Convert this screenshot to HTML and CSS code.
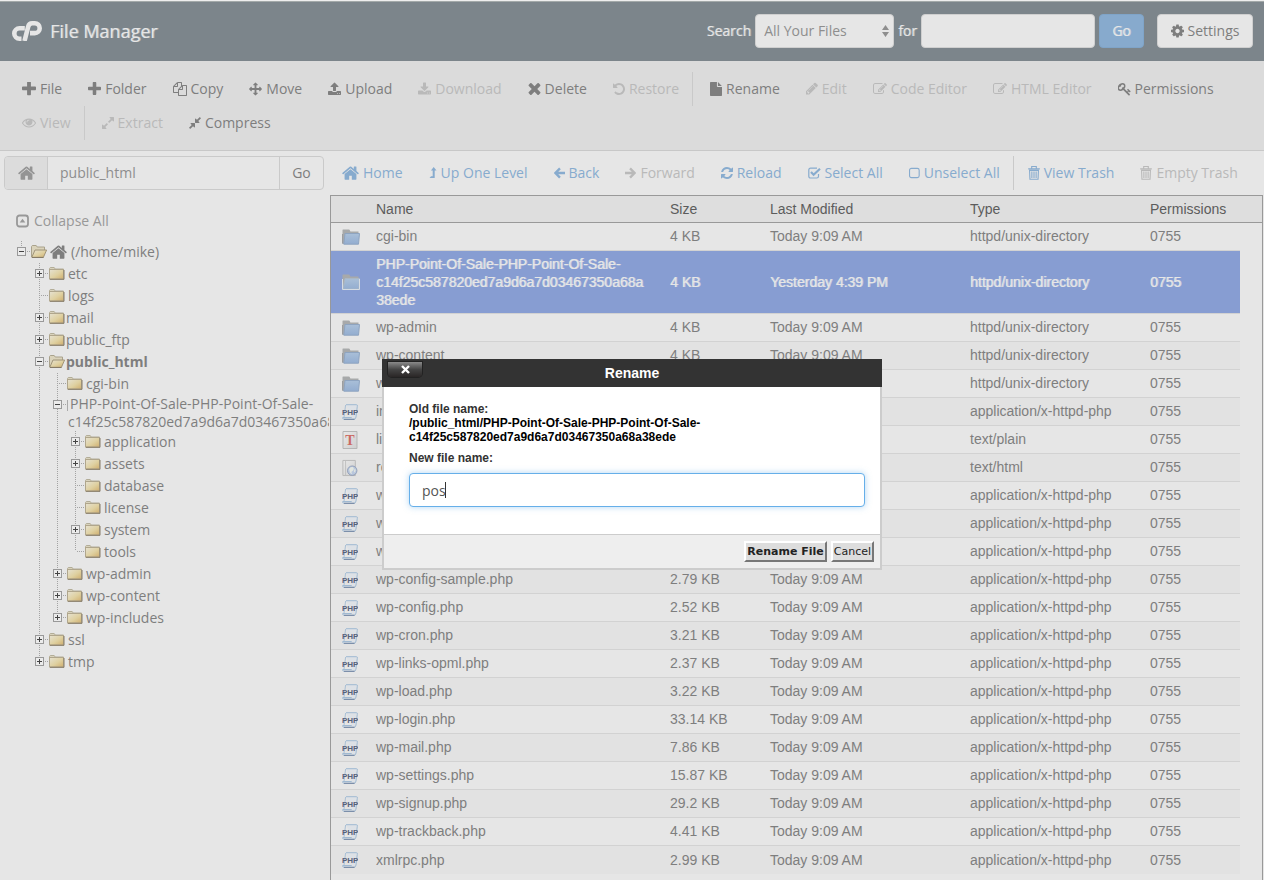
FILE: index.html
```html
<!DOCTYPE html>
<html lang="en">
<head>
<meta charset="utf-8">
<title>File Manager</title>
<link rel="stylesheet" href="styles.css">
</head>
<body>
<svg class="defs" aria-hidden="true">
  <defs>
    <linearGradient id="g-tan" x1="0" y1="0" x2="1" y2="1"><stop offset="0" stop-color="#e6e2d2"/><stop offset=".55" stop-color="#dfd0a0"/><stop offset="1" stop-color="#cfae6e"/></linearGradient>
    <linearGradient id="g-blue" x1="0" y1="0" x2="0" y2="1"><stop offset="0" stop-color="#a9bfd8"/><stop offset="1" stop-color="#93add0"/></linearGradient>
    <linearGradient id="g-page" x1="0" y1="0" x2="1" y2="1"><stop offset="0" stop-color="#e8e8e8"/><stop offset="1" stop-color="#cfcfcf"/></linearGradient>
  </defs>
</svg>
<svg class="sprite" aria-hidden="true">
  <symbol id="plus" viewBox="192 192 1408 1408"><path d="M1600 736v192q0 40-28 68t-68 28h-416v416q0 40-28 68t-68 28h-192q-40 0-68-28t-28-68v-416h-416q-40 0-68-28t-28-68v-192q0-40 28-68t68-28h416v-416q0-40 28-68t68-28h192q40 0 68 28t28 68v416h416q40 0 68 28t28 68z"/></symbol>
  <symbol id="cog" viewBox="128 128 1536 1536"><path fill-rule="evenodd" d="M1152 896q0-106-75-181t-181-75-181 75-75 181 75 181 181 75 181-75 75-181zm512-109v222q0 12-8 23t-20 13l-185 28q-19 54-39 91 35 50 107 138 10 12 10 25t-9 23q-27 37-99 108t-94 71q-12 0-26-9l-138-108q-44 23-91 38-16 136-29 186-7 28-36 28h-222q-14 0-24.500-8.500t-11.500-21.500l-28-184q-49-16-90-37l-141 107q-10 9-25 9-14 0-25-11-126-114-165-168-7-10-7-23 0-12 8-23 15-21 51-66.500t54-70.500q-27-50-41-99l-183-27q-13-2-21-12.500t-8-23.500v-222q0-12 8-23t19-13l186-28q14-46 39-92-40-57-107-138-10-12-10-24 0-10 9-23 26-36 98.500-107.500t94.500-71.500q13 0 26 10l138 107q44-23 91-38 16-136 29-186 7-28 36-28h222q14 0 24.500 8.500t11.500 21.500l28 184q49 16 90 37l142-107q9-9 24-9 13 0 25 10 129 119 165 170 7 8 7 22 0 12-8 23-15 21-51 66.500t-54 70.500q26 50 41 98l183 28q13 2 21 12.500t8 23.500z"/></symbol>
  <symbol id="home" viewBox="80 200 1632 1360"><path d="M1472 992v480q0 26-19 45t-45 19h-384v-384h-256v384h-384q-26 0-45-19t-19-45v-480q0-1 .5-3t.5-3l575-474 575 474q1 2 1 6zm223-69l-62 74q-8 9-21 11h-3q-13 0-21-7l-692-577-692 577q-12 8-24 7-13-2-21-11l-62-74q-8-10-7-23.500t11-21.500l719-599q32-26 76-26t76 26l244 204v-195q0-14 9-23t23-9h192q14 0 23 9t9 23v408l219 182q10 8 11 21.500t-7 23.500z"/></symbol>
  <symbol id="copy" viewBox="0 0 1792 1792"><path d="M1696 384q40 0 68 28t28 68v1216q0 40-28 68t-68 28h-960q-40 0-68-28t-28-68v-288h-544q-40 0-68-28t-28-68v-672q0-40 20-88t48-76l408-408q28-28 76-48t88-20h416q40 0 68 28t28 68v328q68-40 128-40h416zm-544 213l-299 299h299v-299zm-640-384l-299 299h299v-299zm196 647l316-316v-416h-384v416q0 40-28 68t-68 28h-416v640h512v-256q0-40 20-88t48-76zm956 804v-1152h-384v416q0 40-28 68t-68 28h-416v640h896z"/></symbol>
  <symbol id="move" viewBox="0 0 1792 1792"><path d="M1792 896q0 26-19 45l-256 256q-19 19-45 19t-45-19-19-45v-128h-384v384h128q26 0 45 19t19 45-19 45l-256 256q-19 19-45 19t-45-19l-256-256q-19-19-19-45t19-45 45-19h128v-384h-384v128q0 26-19 45t-45 19-45-19l-256-256q-19-19-19-45t19-45l256-256q19-19 45-19t45 19 19 45v128h384v-384h-128q-26 0-45-19t-19-45 19-45l256-256q19-19 45-19t45 19l256 256q19 19 19 45t-19 45-45 19h-128v384h384v-128q0-26 19-45t45-19 45 19l256 256q19 19 19 45z"/></symbol>
  <symbol id="upload" viewBox="64 64 1664 1664"><path d="M1344 1472q0-26-19-45t-45-19-45 19-19 45 19 45 45 19 45-19 19-45zm256 0q0-26-19-45t-45-19-45 19-19 45 19 45 45 19 45-19 19-45zm128-224v320q0 40-28 68t-68 28h-1472q-40 0-68-28t-28-68v-320q0-40 28-68t68-28h427q21 56 70.500 92t110.500 36h256q61 0 110.500-36t70.500-92h427q40 0 68 28t28 68zm-325-648q-17 40-59 40h-256v448q0 26-19 45t-45 19h-256q-26 0-45-19t-19-45v-448h-256q-42 0-59-40-17-39 14-69l448-448q18-19 45-19t45 19l448 448q31 30 14 69z"/></symbol>
  <symbol id="download" viewBox="64 0 1664 1664"><path d="M1344 1344q0-26-19-45t-45-19-45 19-19 45 19 45 45 19 45-19 19-45zm256 0q0-26-19-45t-45-19-45 19-19 45 19 45 45 19 45-19 19-45zm128-224v320q0 40-28 68t-68 28h-1472q-40 0-68-28t-28-68v-320q0-40 28-68t68-28h465l135 136q58 56 136 56t136-56l136-136h464q40 0 68 28t28 68zm-325-569q17 41-14 70l-448 448q-18 19-45 19t-45-19l-448-448q-31-29-14-70 17-39 59-39h256v-448q0-26 19-45t45-19h256q26 0 45 19t19 45v448h256q42 0 59 39z"/></symbol>
  <symbol id="times" viewBox="250 320 1292 1280"><path d="M1490 1322q0 40-28 68l-136 136q-28 28-68 28t-68-28l-294-294-294 294q-28 28-68 28t-68-28l-136-136q-28-28-28-68t28-68l294-294-294-294q-28-28-28-68t28-68l136-136q28-28 68-28t68 28l294 294 294-294q28-28 68-28t68 28l136 136q28 28 28 68t-28 68l-294 294 294 294q28 28 28 68z"/></symbol>
  <symbol id="undo" viewBox="128 64 1536 1664"><path d="M1664 896q0 156-61 298t-164 245-245 164-298 61q-172 0-327-72.500t-264-204.500q-7-10-6.500-22.500t8.500-20.500l137-138q10-9 25-9 16 2 23 12 73 95 179 147t225 52q104 0 198.500-40.500t163.500-109.500 109.500-163.500 40.500-198.500-40.500-198.500-109.500-163.500-163.500-109.500-198.500-40.500q-98 0-188 35.500t-160 101.500l137 138q31 30 14 69-17 40-59 40h-448q-26 0-45-19t-19-45v-448q0-42 40-59 39-17 69 14l130 129q107-101 244.500-156.500t284.500-55.500q156 0 298 61t245 164 164 245 61 298z"/></symbol>
  <symbol id="file" viewBox="0 0 13 15"><path d="M0 .8Q0 0 .8 0H7.500v4.600q0 .8.8.8H13v8.800q0 .8-.8.800H.8q-.8 0-.8-.8zM8.600 0l4.200 4.300H8.600z"/></symbol>
  <symbol id="pencil" viewBox="128 256 1536 1408"><path fill-rule="evenodd" d="M491 1536l91-91-235-235-91 91v107h128v128h107zm523-928q0-22-22-22-10 0-17 7l-542 542q-7 7-7 17 0 22 22 22 10 0 17-7l542-542q7-7 7-17zm-54-192l416 416-832 832h-416v-416zm683 96q0 53-37 90l-166 166-416-416 166-165q36-38 90-38 53 0 91 38l235 234q37 39 37 91z"/></symbol>
  <symbol id="edit" viewBox="0 128 1792 1536"><path d="M888 1184l116-116-152-152-116 116v56h96v96h56zm440-720q-16-16-33 1l-350 350q-17 17-1 33t33-1l350-350q17-17 1-33zm80 594v190q0 119-84.500 203.500t-203.500 84.500h-832q-119 0-203.500-84.500t-84.500-203.500v-832q0-119 84.500-203.500t203.500-84.500h832q63 0 117 25 15 7 18 23 3 17-9 29l-49 49q-14 14-32 8-23-6-45-6h-832q-66 0-113 47t-47 113v832q0 66 47 113t113 47h832q66 0 113-47t47-113v-126q0-13 9-22l64-64q15-15 35-7t20 29zm-96-738l288 288-672 672h-288v-288zm444 132l-92 92-288-288 92-92q28-28 68-28t68 28l152 152q28 28 28 68t-28 68z"/></symbol>
  <symbol id="key" viewBox="64 96 1664 1600"><path d="M832 512q0-80-56-136t-136-56-136 56-56 136q0 42 19 83-41-19-83-19-80 0-136 56t-56 136 56 136 136 56 136-56 56-136q0-42-19-83 41 19 83 19 80 0 136-56t56-136zm851 704q0 17-49 66t-66 49q-9 0-28.500-16t-36.500-33-38.500-40-24.500-26l-96 96 220 220q28 28 28 68 0 42-39 81t-81 39q-40 0-68-28l-671-671q-176 131-365 131-163 0-265.500-102.500t-102.500-265.500q0-160 95-313t248-248 313-95q163 0 265.500 102.500t102.500 265.500q0 189-131 365l355 355 96-96q-3-3-26-24.500t-40-38.500-33-36.500-16-28.500q0-17 49-66t66-49q13 0 23 10 6 6 46 44.500t82 79.500 86.500 86 73 78 28.500 41z"/></symbol>
  <symbol id="eye" viewBox="0 256 1792 1408"><path d="M1664 960q-152-236-381-353 61 104 61 225 0 185-131.500 316.500t-316.500 131.500-316.500-131.500-131.500-316.500q0-121 61-225-229 117-381 353 133 205 333.500 326.500t434.500 121.500 434.500-121.500 333.500-326.500zm-720-384q0-20-14-34t-34-14q-125 0-214.500 89.500t-89.500 214.500q0 20 14 34t34 14 34-14 14-34q0-86 61-147t147-61q20 0 34-14t14-34zm848 384q0 34-20 69-140 230-376.500 368.500t-499.500 138.500-499.500-139-376.500-368q-20-35-20-69t20-69q140-229 376.500-368t499.500-139 499.500 139 376.500 368q20 35 20 69z"/></symbol>
  <symbol id="expand" viewBox="128 128 1536 1536"><path d="M883 1056q0 13-10 23l-332 332 144 144q19 19 19 45t-19 45-45 19h-448q-26 0-45-19t-19-45v-448q0-26 19-45t45-19 45 19l144 144 332-332q10-10 23-10t23 10l114 114q10 10 10 23zm781-864v448q0 26-19 45t-45 19-45-19l-144-144-332 332q-10 10-23 10t-23-10l-114-114q-10-10-10-23t10-23l332-332-144-144q-19-19-19-45t19-45 45-19h448q26 0 45 19t19 45z"/></symbol>
  <symbol id="compress" viewBox="128 128 1536 1536"><path d="M896 960v448q0 26-19 45t-45 19-45-19l-144-144-332 332q-10 10-23 10t-23-10l-114-114q-10-10-10-23t10-23l332-332-144-144q-19-19-19-45t19-45 45-19h448q26 0 45 19t19 45zm755-672q0 13-10 23l-332 332 144 144q19 19 19 45t-19 45-45 19h-448q-26 0-45-19t-19-45v-448q0-26 19-45t45-19 45 19l144 144 332-332q10-10 23-10t23 10l114 114q10 10 10 23z"/></symbol>
  <symbol id="refresh" viewBox="128 128 1536 1536"><path d="M1639 1056q0 5-1 7-64 268-268 434.500t-478 166.500q-146 0-282.500-55t-243.500-157l-129 129q-19 19-45 19t-45-19-19-45v-448q0-26 19-45t45-19h448q26 0 45 19t19 45-19 45l-137 137q71 66 161 102t187 36q134 0 250-65t186-179q11-17 53-117 8-23 30-23h192q13 0 22.500 9.500t9.500 22.500zm25-800v448q0 26-19 45t-45 19h-448q-26 0-45-19t-19-45 19-45l138-138q-148-137-349-137-134 0-250 65t-186 179q-11 17-53 117-8 23-30 23h-199q-13 0-22.500-9.500t-9.500-22.500v-7q65-268 270-434.500t480-166.500q146 0 284 55.500t245 156.500l130-129q19-19 45-19t45 19 19 45z"/></symbol>
  <symbol id="levelup" viewBox="0 0 7 12"><path d="M4.200 0L7 3.600H5.200V11H0L1.600 9.200h1.600V3.600H1.400z"/></symbol>
  <symbol id="left" viewBox="0 0 12 12"><path d="M6.500 1L1.500 6l5 5M2 6h10" fill="none" stroke="currentColor" stroke-width="2.600"/></symbol>
  <symbol id="right" viewBox="0 0 12 12"><path d="M5.500 1l5 5-5 5M10 6H0" fill="none" stroke="currentColor" stroke-width="2.600"/></symbol>
  <symbol id="checked" viewBox="0 0 13 12"><path d="M10.500 7v2.200q0 1.800-1.800 1.800H2.600Q.8 11 .8 9.200V3Q.8 1.200 2.600 1.200H9" fill="none" stroke="currentColor" stroke-width="1.200"/><path d="M3 5l2.600 2.700L12 1.800" fill="none" stroke="currentColor" stroke-width="2.200"/></symbol>
  <symbol id="unchecked" viewBox="0 0 12 12"><rect x=".6" y="1" width="10.500" height="10" rx="2" fill="none" stroke="currentColor" stroke-width="1.200"/></symbol>
  <symbol id="trash" viewBox="0 0 13 16"><path d="M.2 3.500h12.600M4 3V1h5v2M1.700 5.200l.4 9.600h8.800l.4-9.600zM4.200 6.500v7M6.500 6.500v7M8.800 6.500v7" fill="none" stroke="currentColor" stroke-width="1.200"/></symbol>
  <symbol id="collapse" viewBox="0 0 13 13"><rect x="1" y="1" width="11" height="11" rx="2.500" fill="none" stroke="currentColor" stroke-width="1.800"/><path d="M6.500 4.200L9.300 8H3.700z"/></symbol>
  <symbol id="tfolder" viewBox="0 0 16 13"><path d="M.5 3V1.300L1.300.5h3.900l1 1.500h8.300v2" fill="#d8d2bc" stroke="#b3ad98"/><rect x=".5" y="2.500" width="14" height="9.500" fill="url(#g-tan)" stroke="#b0a68c"/><path d="M1 12.300h14V3" fill="none" stroke="#857a66"/></symbol>
  <symbol id="topen" viewBox="0 0 16 13"><path d="M.5 12V1.500L1.300.5h3.900l1 1.500h7.300v3" fill="#dad3bb" stroke="#a9a28c"/><path d="M.8 12.300L4 5h11.600l-3.200 7.300z" fill="url(#g-tan)" stroke="#a09478"/><path d="M1 12.500h11.500" stroke="#857a66"/></symbol>
  <symbol id="folder" viewBox="0 0 18 16"><path d="M.5 15V1Q.5.500 1 .5h6q.5 0 .8.800l.6 1.200h8.100v3L3 15z" fill="#a7a9aa"/><path d="M.5 5v9.500" stroke="#9b9da0"/><path d="M3 4.500h14.500l-1 10.700H1.800z" fill="url(#g-blue)" stroke="#8ea4c0"/></symbol>
  <symbol id="folder-sel" viewBox="0 0 18 16"><path d="M.5 15V1Q.5.500 1 .5h6q.5 0 .8.800l.6 1.200h8.100v3L3 15z" fill="#a7a9aa"/><path d="M3 4.500h14.500l-.5 10.700H1z" fill="url(#g-blue)" stroke="#a9b7c6"/><path d="M.5 5v10.500h17V5" fill="none" stroke="#d6dce2"/></symbol>
  <symbol id="php" viewBox="0 0 16 16"><path d="M4 .7h10.500q1.200 0 .8 1.500L14 13q-.3 2.300-2 2.300H2Q.4 15.300.7 13.500h9" fill="#dde1e6" stroke="#9fb9d2"/><path d="M2 15.300h10.500" stroke="#71839f"/><path d="M3.600 1L2 13" stroke="#a9c0d6"/><text x="0" y="11" class="php-label">PHP</text></symbol>
  <symbol id="txt" viewBox="0 0 16 18"><path d="M1 .5h14v17H1z" fill="url(#g-page)" stroke="#b5b5b5"/><text x="8" y="14" class="txt-label">T</text></symbol>
  <symbol id="htm" viewBox="0 0 18 18"><path d="M1 .5h14v17H1z" fill="url(#g-page)" stroke="#b5b5b5"/><path d="M4 1v16" stroke="#bcbcbc"/><circle cx="11.500" cy="12" r="5.300" fill="#b9c7dd" stroke="#8d9bb5"/><path d="M8 10q2-3 4-2t1 3-2 2 0 2-2-1zM14 10l1.500 1-1 3-1-1z" fill="#e2e6e0"/></symbol>
  <symbol id="minus-box" viewBox="0 0 9 9"><rect x=".5" y=".5" width="8" height="8" fill="#ebebeb" stroke="#999"/><path d="M2 4.500h5" stroke="#444"/></symbol>
  <symbol id="plus-box" viewBox="0 0 9 9"><rect x=".5" y=".5" width="8" height="8" fill="#ebebeb" stroke="#999"/><path d="M2 4.500h5M4.500 2v5" stroke="#444"/></symbol>
</svg>

<header class="topbar">
  <h1 class="brand">
    <svg class="logo" viewBox="0 0 30 20" aria-hidden="true"><g fill="none" stroke="currentColor" stroke-width="4.600"><path d="M12.800 7.300H7.500a5.200 5.200 0 0 0 0 10.400H9.500"/><path d="M12.500 20L16.200 5.600Q17 2.300 20.200 2.300H22.800a4.900 4.900 0 0 1 0 9.800H18"/></g></svg>
    File Manager
  </h1>
  <form class="search">
    <label for="scope">Search</label>
    <span class="select-wrap">
      <select id="scope" class="control"><option>All Your Files</option></select>
      <svg class="arrows" viewBox="0 0 7 12" aria-hidden="true"><path d="M3.500 0L7 5H0zM3.500 12L0 7h7z"/></svg>
    </span>
    <label for="term">for</label>
    <input id="term" class="control term" type="text">
    <button class="go" type="button">Go</button>
    <button class="control settings" type="button"><svg class="icon w13"><use href="#cog"/></svg>Settings</button>
  </form>
</header>

<nav class="toolbar">
  <button class="tool"><svg class="icon w14"><use href="#plus"/></svg>File</button>
  <button class="tool"><svg class="icon w13"><use href="#plus"/></svg>Folder</button>
  <button class="tool"><svg class="icon w14"><use href="#copy"/></svg>Copy</button>
  <button class="tool"><svg class="icon w13"><use href="#move"/></svg>Move</button>
  <button class="tool"><svg class="icon w13"><use href="#upload"/></svg>Upload</button>
  <button class="tool" disabled><svg class="icon w13"><use href="#download"/></svg>Download</button>
  <button class="tool"><svg class="icon w13"><use href="#times"/></svg>Delete</button>
  <button class="tool" disabled><svg class="icon w12"><use href="#undo"/></svg>Restore</button>
  <span class="divider"></span>
  <button class="tool"><svg class="icon w12"><use href="#file"/></svg>Rename</button>
  <button class="tool" disabled><svg class="icon w12"><use href="#pencil"/></svg>Edit</button>
  <button class="tool" disabled><svg class="icon w14"><use href="#edit"/></svg>Code Editor</button>
  <button class="tool" disabled><svg class="icon w14"><use href="#edit"/></svg>HTML Editor</button>
  <button class="tool"><svg class="icon w13"><use href="#key"/></svg>Permissions</button>
  <button class="tool" disabled><svg class="icon w14"><use href="#eye"/></svg>View</button>
  <span class="divider"></span>
  <button class="tool" disabled><svg class="icon w12"><use href="#expand"/></svg>Extract</button>
  <button class="tool"><svg class="icon w12"><use href="#compress"/></svg>Compress</button>
</nav>

<div class="workspace">
  <aside class="sidebar">
    <form class="path">
      <button class="path-home" type="button" aria-label="Home"><svg class="icon w17"><use href="#home"/></svg></button>
      <input class="path-input" type="text" value="public_html" aria-label="Path">
      <button class="path-go" type="button">Go</button>
    </form>
    <button class="collapse" type="button"><svg class="icon w13"><use href="#collapse"/></svg>Collapse All</button>
    <ul class="tree">
      <li><div class="node root"><svg class="box"><use href="#minus-box"/></svg><i class="dots"></i><svg class="tf"><use href="#topen"/></svg><svg class="icon w17"><use href="#home"/></svg><span>(/home/mike)</span></div>
        <ul>
          <li><div class="node"><svg class="box"><use href="#plus-box"/></svg><i class="dots"></i><svg class="tf"><use href="#tfolder"/></svg><span>etc</span></div></li>
          <li><div class="node leaf"><i class="dots"></i><svg class="tf"><use href="#tfolder"/></svg><span>logs</span></div></li>
          <li><div class="node tight"><svg class="box"><use href="#plus-box"/></svg><i class="dots"></i><svg class="tf"><use href="#tfolder"/></svg><span>mail</span></div></li>
          <li><div class="node tight"><svg class="box"><use href="#plus-box"/></svg><i class="dots"></i><svg class="tf"><use href="#tfolder"/></svg><span>public_ftp</span></div></li>
          <li><div class="node tight"><svg class="box"><use href="#minus-box"/></svg><i class="dots"></i><svg class="tf"><use href="#topen"/></svg><strong>public_html</strong></div>
            <ul>
              <li><div class="node leaf"><i class="dots"></i><svg class="tf"><use href="#tfolder"/></svg><span>cgi-bin</span></div></li>
              <li><div class="node long"><svg class="box"><use href="#minus-box"/></svg><i class="dots"></i><i class="sliver"></i><span>PHP-Point-Of-Sale-PHP-Point-Of-Sale-<br>c14f25c587820ed7a9d6a7d03467350a68a38ede</span></div>
                <ul>
                  <li><div class="node"><svg class="box"><use href="#plus-box"/></svg><i class="dots"></i><svg class="tf"><use href="#tfolder"/></svg><span>application</span></div></li>
                  <li><div class="node"><svg class="box"><use href="#plus-box"/></svg><i class="dots"></i><svg class="tf"><use href="#tfolder"/></svg><span>assets</span></div></li>
                  <li><div class="node leaf"><i class="dots"></i><svg class="tf"><use href="#tfolder"/></svg><span>database</span></div></li>
                  <li><div class="node leaf"><i class="dots"></i><svg class="tf"><use href="#tfolder"/></svg><span>license</span></div></li>
                  <li><div class="node"><svg class="box"><use href="#plus-box"/></svg><i class="dots"></i><svg class="tf"><use href="#tfolder"/></svg><span>system</span></div></li>
                  <li><div class="node leaf"><i class="dots"></i><svg class="tf"><use href="#tfolder"/></svg><span>tools</span></div></li>
                </ul>
              </li>
              <li><div class="node"><svg class="box"><use href="#plus-box"/></svg><i class="dots"></i><svg class="tf"><use href="#tfolder"/></svg><span>wp-admin</span></div></li>
              <li><div class="node"><svg class="box"><use href="#plus-box"/></svg><i class="dots"></i><svg class="tf"><use href="#tfolder"/></svg><span>wp-content</span></div></li>
              <li><div class="node"><svg class="box"><use href="#plus-box"/></svg><i class="dots"></i><svg class="tf"><use href="#tfolder"/></svg><span>wp-includes</span></div></li>
            </ul>
          </li>
          <li><div class="node"><svg class="box"><use href="#plus-box"/></svg><i class="dots"></i><svg class="tf"><use href="#tfolder"/></svg><span>ssl</span></div></li>
          <li><div class="node"><svg class="box"><use href="#plus-box"/></svg><i class="dots"></i><svg class="tf"><use href="#tfolder"/></svg><span>tmp</span></div></li>
        </ul>
      </li>
    </ul>
  </aside>

  <main class="content">
    <nav class="actions">
      <button class="tool"><svg class="icon w17"><use href="#home"/></svg>Home</button>
      <button class="tool"><svg class="icon w8"><use href="#levelup"/></svg>Up One Level</button>
      <button class="tool"><svg class="icon w11"><use href="#left"/></svg>Back</button>
      <button class="tool" disabled><svg class="icon w11"><use href="#right"/></svg>Forward</button>
      <button class="tool"><svg class="icon w12"><use href="#refresh"/></svg>Reload</button>
      <button class="tool"><svg class="icon w13"><use href="#checked"/></svg>Select All</button>
      <button class="tool"><svg class="icon w11"><use href="#unchecked"/></svg>Unselect All</button>
      <span class="divider"></span>
      <button class="tool"><svg class="icon w12 tall"><use href="#trash"/></svg>View Trash</button>
      <button class="tool" disabled><svg class="icon w12 tall"><use href="#trash"/></svg>Empty Trash</button>
    </nav>
    <div class="listing">
      <table>
        <colgroup><col class="c-icon"><col><col class="c-size"><col class="c-mod"><col class="c-type"><col class="c-perm"><col class="c-gutter"></colgroup>
        <thead><tr><th></th><th>Name</th><th>Size</th><th>Last Modified</th><th>Type</th><th>Permissions</th><th></th></tr></thead>
        <tbody>
          <tr><td><svg class="fi"><use href="#folder"/></svg></td><td>cgi-bin</td><td>4 KB</td><td>Today 9:09 AM</td><td>httpd/unix-directory</td><td>0755</td><td></td></tr>
          <tr class="selected"><td><svg class="fi"><use href="#folder-sel"/></svg></td><td>PHP-Point-Of-Sale-PHP-Point-Of-Sale-c14f25c587820ed7a9d6a7d03467350a68a38ede</td><td>4 KB</td><td>Yesterday 4:39 PM</td><td>httpd/unix-directory</td><td>0755</td><td></td></tr>
          <tr><td><svg class="fi"><use href="#folder"/></svg></td><td>wp-admin</td><td>4 KB</td><td>Today 9:09 AM</td><td>httpd/unix-directory</td><td>0755</td><td></td></tr>
          <tr><td><svg class="fi"><use href="#folder"/></svg></td><td>wp-content</td><td>4 KB</td><td>Today 9:09 AM</td><td>httpd/unix-directory</td><td>0755</td><td></td></tr>
          <tr><td><svg class="fi"><use href="#folder"/></svg></td><td>wp-includes</td><td>4 KB</td><td>Today 9:09 AM</td><td>httpd/unix-directory</td><td>0755</td><td></td></tr>
          <tr><td><svg class="fi php"><use href="#php"/></svg></td><td>index.php</td><td></td><td></td><td>application/x-httpd-php</td><td>0755</td><td></td></tr>
          <tr><td><svg class="fi doc"><use href="#txt"/></svg></td><td>license.txt</td><td></td><td></td><td>text/plain</td><td>0755</td><td></td></tr>
          <tr><td><svg class="fi doc"><use href="#htm"/></svg></td><td>readme.html</td><td></td><td></td><td>text/html</td><td>0755</td><td></td></tr>
          <tr><td><svg class="fi php"><use href="#php"/></svg></td><td>wp-activate.php</td><td></td><td></td><td>application/x-httpd-php</td><td>0755</td><td></td></tr>
          <tr><td><svg class="fi php"><use href="#php"/></svg></td><td>wp-blog-header.php</td><td></td><td></td><td>application/x-httpd-php</td><td>0755</td><td></td></tr>
          <tr><td><svg class="fi php"><use href="#php"/></svg></td><td>wp-comments-post.php</td><td></td><td></td><td>application/x-httpd-php</td><td>0755</td><td></td></tr>
          <tr><td><svg class="fi php"><use href="#php"/></svg></td><td>wp-config-sample.php</td><td>2.79 KB</td><td>Today 9:09 AM</td><td>application/x-httpd-php</td><td>0755</td><td></td></tr>
          <tr><td><svg class="fi php"><use href="#php"/></svg></td><td>wp-config.php</td><td>2.52 KB</td><td>Today 9:09 AM</td><td>application/x-httpd-php</td><td>0755</td><td></td></tr>
          <tr><td><svg class="fi php"><use href="#php"/></svg></td><td>wp-cron.php</td><td>3.21 KB</td><td>Today 9:09 AM</td><td>application/x-httpd-php</td><td>0755</td><td></td></tr>
          <tr><td><svg class="fi php"><use href="#php"/></svg></td><td>wp-links-opml.php</td><td>2.37 KB</td><td>Today 9:09 AM</td><td>application/x-httpd-php</td><td>0755</td><td></td></tr>
          <tr><td><svg class="fi php"><use href="#php"/></svg></td><td>wp-load.php</td><td>3.22 KB</td><td>Today 9:09 AM</td><td>application/x-httpd-php</td><td>0755</td><td></td></tr>
          <tr><td><svg class="fi php"><use href="#php"/></svg></td><td>wp-login.php</td><td>33.14 KB</td><td>Today 9:09 AM</td><td>application/x-httpd-php</td><td>0755</td><td></td></tr>
          <tr><td><svg class="fi php"><use href="#php"/></svg></td><td>wp-mail.php</td><td>7.86 KB</td><td>Today 9:09 AM</td><td>application/x-httpd-php</td><td>0755</td><td></td></tr>
          <tr><td><svg class="fi php"><use href="#php"/></svg></td><td>wp-settings.php</td><td>15.87 KB</td><td>Today 9:09 AM</td><td>application/x-httpd-php</td><td>0755</td><td></td></tr>
          <tr><td><svg class="fi php"><use href="#php"/></svg></td><td>wp-signup.php</td><td>29.2 KB</td><td>Today 9:09 AM</td><td>application/x-httpd-php</td><td>0755</td><td></td></tr>
          <tr><td><svg class="fi php"><use href="#php"/></svg></td><td>wp-trackback.php</td><td>4.41 KB</td><td>Today 9:09 AM</td><td>application/x-httpd-php</td><td>0755</td><td></td></tr>
          <tr><td><svg class="fi php"><use href="#php"/></svg></td><td>xmlrpc.php</td><td>2.99 KB</td><td>Today 9:09 AM</td><td>application/x-httpd-php</td><td>0755</td><td></td></tr>
        </tbody>
      </table>
    </div>
  </main>
</div>

<section class="dialog" role="dialog" aria-labelledby="dlg-title">
  <header class="dialog-head">
    <h2 id="dlg-title">Rename</h2>
    <button class="close" type="button" aria-label="Close"><svg viewBox="0 0 9 9"><path d="M1 1l7 7M8 1L1 8" stroke="#fff" stroke-width="2.400"/></svg></button>
  </header>
  <form class="dialog-body">
    <p class="caption">Old file name:</p>
    <p class="old-name">/public_html/PHP-Point-Of-Sale-PHP-Point-Of-Sale-c14f25c587820ed7a9d6a7d03467350a68a38ede</p>
    <label class="caption" for="newname">New file name:</label>
    <div class="field"><input id="newname" type="text" value="pos"><span class="caret"></span></div>
  </form>
  <footer class="dialog-foot">
    <button class="bevel primary" type="button">Rename File</button>
    <button class="bevel" type="button">Cancel</button>
  </footer>
</section>
</body>
</html>
```

FILE: styles.css
```css
* { box-sizing: border-box; }

body {
  margin: 0;
  min-height: 100vh;
  display: flex;
  flex-direction: column;
  background: #e6e6e6;
  color: #7e7e7e;
  font: 14px/20px "Open Sans", "Noto Sans", sans-serif;
}

button, input, select { font: inherit; color: inherit; margin: 0; }
button { padding: 0; border: 0; background: none; white-space: nowrap; }
ul { list-style: none; margin: 0; padding: 0; }

.defs { position: absolute; width: 0; height: 0; }
.sprite { display: none; }

.icon { height: 14px; margin-right: 4px; flex: none; fill: currentColor; }
.w8 { width: 8px; height: 12px; }
.w11 { width: 11px; }
.w12 { width: 12px; }
.w13 { width: 13px; }
.w14 { width: 14px; }
.w17 { width: 17px; }
.tall { height: 16px; }

/* Top bar */
.topbar {
  display: flex;
  align-items: center;
  justify-content: space-between;
  height: 61px;
  padding: 0 11px 0 12px;
  border-top: 1px solid #eee;
  background: #7c858b;
  box-shadow: inset 0 1px #a3a9a9;
  color: #e6e6e6;
}
.brand {
  display: flex;
  align-items: center;
  gap: 8px;
  margin: 0;
  font-size: 18px;
  font-weight: 400;
  line-height: 24px;
  text-shadow: 1px 0 rgba(230, 230, 230, .5);
}
.logo { width: 30px; height: 20px; }
.search { display: flex; align-items: center; gap: 4px; }
.search label { text-shadow: 1px 0 rgba(230, 230, 230, .5); }
.control {
  height: 34px;
  border: 1px solid #cfcfcf;
  border-radius: 4px;
  background: #e6e6e6;
  color: #7e7e7e;
}
.select-wrap { position: relative; }
.select-wrap select { width: 139px; padding: 0 8px; appearance: none; color: #8e8e8e; display: block; }
.arrows { position: absolute; right: 5px; top: 11px; width: 7px; height: 12px; fill: #8e8e8e; }
.term { width: 174px; padding: 0 12px; }
.go {
  width: 45px;
  height: 34px;
  border: 1px solid #7fa4c8;
  border-radius: 4px;
  background: #87aacd;
  color: #e6e6e6;
  text-shadow: 1px 0 rgba(230, 230, 230, .6);
}
.settings { display: flex; align-items: center; justify-content: center; width: 96px; margin-left: 9px; }

/* Toolbars */
.toolbar {
  display: flex;
  flex-wrap: wrap;
  padding: 11px 9px 10px;
  border-bottom: 1px solid #c8c8c8;
  background: #dbdbdb;
}
.tool { display: flex; align-items: center; height: 34px; padding: 0 13px; }
.tool:disabled { color: #b9b9b9; }
.divider { width: 1px; height: 34px; margin-right: 4px; background: #c9c9c9; }

.workspace { flex: 1; display: flex; }

/* Sidebar */
.sidebar { width: 329px; flex: none; padding: 5px 0 0 4px; overflow: hidden; }
.path {
  display: flex;
  width: 320px;
  height: 34px;
  border: 1px solid #cacaca;
  border-radius: 4px;
  overflow: hidden;
}
.path-home { width: 43px; display: flex; align-items: center; justify-content: center; background: #dcdcdc; border-right: 1px solid #cacaca; color: #949494; }
.path-home .icon { margin: 0; }
.path-input { flex: 1; min-width: 0; padding: 0 12px; border: 0; background: #e6e6e6; color: #8e8e8e; }
.path-go { width: 44px; border-left: 1px solid #cacaca; }
.collapse { display: flex; align-items: center; margin: 21px 0 10px 12px; color: #989898; }
.collapse .icon { margin-right: 5px; }

.tree { padding-left: 13px; white-space: nowrap; }
.tree ul { padding-left: 18px; }
.tree li { position: relative; }
.tree li::before {
  content: "";
  position: absolute;
  left: 4px;
  top: 0;
  bottom: 0;
  width: 1px;
  background: repeating-linear-gradient(#a3a3a3 0 1px, transparent 1px 2px);
}
.tree li:last-child::before { bottom: auto; height: 10px; }
.node { display: flex; align-items: center; height: 22px; position: relative; }
.node > * { flex: none; }
.node .box { width: 9px; height: 9px; margin-bottom: 2px; }
.dots { width: 5px; height: 1px; margin-bottom: 2px; background: repeating-linear-gradient(90deg, transparent 0 1px, #a3a3a3 1px 2px); }
.leaf .dots { width: 9px; margin-left: 5px; }
.tf { width: 16px; height: 13px; margin-bottom: 2px; margin-right: 3px; }
.tight .tf { margin-right: 1px; }
.long { height: 36px; align-items: flex-start; line-height: 18px; text-indent: 2px; }
.long .box { margin-top: 5px; }
.long .dots { margin-top: 9px; }
.sliver { width: 1px; height: 11px; margin-top: 5px; background: #aaa; }

/* Listing */
.content { flex: 1; min-width: 0; display: flex; flex-direction: column; padding: 5px 1px 0 0; }
.actions { display: flex; height: 34px; margin-bottom: 5px; color: #87abce; }
.actions .divider { margin-right: 1px; }
.listing {
  flex: 1;
  margin-left: 1px;
  border: 1px solid #999;
  border-bottom: 0;
  font-family: "Liberation Sans", Arial, sans-serif;
  line-height: 18px;
}
table { width: 100%; border-collapse: separate; border-spacing: 0; table-layout: fixed; }
.c-icon { width: 37px; }
.c-size { width: 100px; }
.c-mod { width: 200px; }
.c-type { width: 180px; }
.c-perm { width: 98px; }
.c-gutter { width: 22px; }
th { height: 27px; padding: 0 8px; border-bottom: 1px solid #999; background: #dedede; color: #5c5c5c; font-weight: 400; text-align: left; }
td { height: 28px; padding: 4px 8px 5px; border-bottom: 1px solid #d2d2d2; vertical-align: middle; overflow-wrap: anywhere; }
td:nth-child(2) { padding-right: 17px; }
tbody tr:nth-child(even) td { background: #e2e2e2; }
tbody tr td:first-child { padding: 0 0 0 11px; }
tbody tr td:last-child { border: 0; background: none; }
tbody tr:last-child td { border: 0; }
tbody tr.selected td { padding-top: 4px; padding-bottom: 4px; }
tbody tr.selected td:not(:last-child) { background: #879dd2; color: #e6e6e6; text-shadow: 1px 0 rgba(230, 230, 230, .7); }
.fi { display: block; width: 18px; height: 16px; overflow: visible; }
.fi.php { width: 16px; }
.fi.doc { width: 16px; height: 18px; }
.php-label { font: bold 8px "Liberation Sans", sans-serif; fill: #56617a; }
.txt-label { font: bold 14px "Liberation Serif", serif; fill: #cb6a64; text-anchor: middle; }

/* Rename dialog */
.dialog {
  position: absolute;
  left: 50%;
  top: 359px;
  width: 500px;
  margin-left: -250px;
  font-family: "Liberation Sans", Arial, sans-serif;
  background: #fff;
}
.dialog-head { position: relative; background: #333; color: #fff; }
.dialog-head h2 { margin: 0; font-size: 14px; line-height: 28px; text-align: center; }
.close {
  position: absolute;
  left: 6px;
  top: 3px;
  width: 34px;
  height: 15px;
  display: flex;
  align-items: center;
  justify-content: center;
  border-radius: 0 0 4px 4px;
  background: linear-gradient(#8a8a8a, #444 50%, #2a2626);
  box-shadow: 0 0 0 1px #222;
}
.close svg { width: 9px; height: 9px; }
.dialog-body { padding: 15px 15px 27px 25px; border: 2px solid #ccc; border-width: 0 2px; font-size: 12px; font-weight: 700; line-height: 14px; color: #222; }
.dialog-body p { margin: 0; }
.dialog-body .old-name { max-width: 320px; margin-bottom: 7px; color: #000; }
.caption { display: block; color: #333; }
.field { position: relative; margin-top: 8px; }
.field input {
  display: block;
  width: 100%;
  height: 34px;
  padding: 0 12px;
  border: 1px solid #66afe9;
  border-radius: 4px;
  background: #fff;
  box-shadow: 0 0 6px rgba(102, 175, 233, .5);
  color: #555;
  font: 14px/20px "Open Sans", sans-serif;
  outline: 0;
}
.caret { position: absolute; left: 36px; top: 9px; width: 1px; height: 16px; background: #333; }
.dialog-foot {
  display: flex;
  justify-content: flex-end;
  gap: 4px;
  padding: 6px;
  border: 2px solid #ccc;
  border-top-width: 1px;
  background: #eee;
}
.bevel {
  height: 21px;
  padding: 0 1px;
  border: 2px solid;
  border-color: #fff #777 #777 #fff;
  background: #ddd;
  color: #222;
  font: 11px/16px "DejaVu Sans", Verdana, sans-serif;
}
.primary { font-weight: 700; }
```
